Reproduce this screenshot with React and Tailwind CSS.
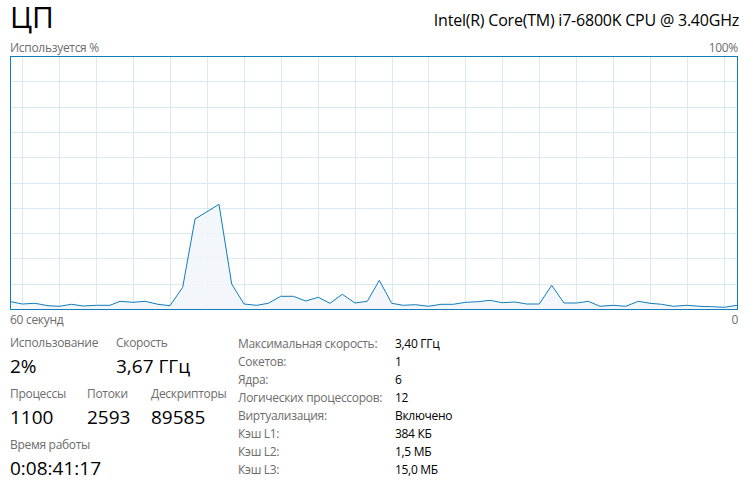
import React from "react";

const pts = [[10.7,301.7],[22.3,304],[35,303.3],[48,305.7],[59,306.3],[71.7,304.3],[83,306],[96.7,305.3],[110,305.3],[120,301.3],[133,302.3],[145,301.3],[158,304.3],[170,305.7],[182.7,287.3],[195,219],[207,211.7],[219,204.3],[231.7,284],[244,304],[256.7,305.3],[268.3,303.3],[280.7,296.3],[293.3,296.3],[305.7,301],[318.3,297.3],[330,303.3],[342.3,294.3],[355,303],[367.3,301.3],[379.3,280.3],[391.7,303.3],[403.3,305.3],[415.7,304.7],[428.3,306.3],[441,304.3],[453.3,304.3],[465.7,302.3],[478.3,301.7],[490,300.3],[502.3,302.7],[515,302],[526.7,304],[539.3,304],[551.7,285.3],[564,303],[576.7,303],[588.3,301.3],[600,306.3],[613.3,305.3],[625.7,306.3],[638.3,301.3],[650,303.3],[661.7,304.3],[673.3,306.3],[686.7,305.3],[700,306.3],[711.7,306.7],[724.3,307.3],[737,305.3]];

function Chart() {
  const vlines = [];
  for (let k = 0; k < 20; k++) vlines.push(Math.round(22 + 36.95 * k) + 0.5);
  const hlines = [];
  for (let k = 1; k < 10; k++) hlines.push(Math.round(56 + 25.3 * k) + 0.5);
  const line = pts.map((p) => p.join(",")).join(" ");
  const area = line + " 737,309 10.7,309";
  return (
    <div className="w-[728px] h-[254px] border border-[#117dbb]">
      <svg width="726" height="252" viewBox="11 57 726 252" className="block">
        {vlines.map((x) => (
          <line key={"v" + x} x1={x} x2={x} y1="57" y2="309" stroke="#d9eaf4" strokeWidth="1" />
        ))}
        {hlines.map((y) => (
          <line key={"h" + y} x1="11" x2="737" y1={y} y2={y} stroke="#d9eaf4" strokeWidth="1" />
        ))}
        <polygon points={area} fill="#f1f6fa" fillOpacity="0.85" />
        <polyline points={line} fill="none" stroke="#117dbb" strokeWidth="1" strokeLinejoin="round" />
      </svg>
    </div>
  );
}

function Stat({ label, value, w }) {
  return (
    <div className={w}>
      <div className="text-[12px] leading-[16px] tracking-[-0.3px] text-[#6d6d6d]">{label}</div>
      <div className="text-[19px] leading-[30px] text-black">{value}</div>
    </div>
  );
}

const rows = [
  ["Максимальная скорость:", "3,40 ГГц"],
  ["Сокетов:", "1"],
  ["Ядра:", "6"],
  ["Логических процессоров:", "12"],
  ["Виртуализация:", "Включено"],
  ["Кэш L1:", "384 КБ"],
  ["Кэш L2:", "1,5 МБ"],
  ["Кэш L3:", "15,0 МБ"],
];

export default function App() {
  return (
    <div className="w-[749px] h-[487px] bg-white px-[10px] overflow-hidden" style={{ fontFamily: '"Open Sans", "Noto Sans", sans-serif' }}>
      <div className="flex justify-between items-start h-[40px]">
        <div className="text-[30px] leading-[34px] font-normal text-black">ЦП</div>
        <div className="text-[16px] leading-[40px] tracking-[-0.22px] text-black">Intel(R) Core(TM) i7-6800K CPU @ 3.40GHz</div>
      </div>
      <div className="flex justify-between w-[728px] text-[12px] leading-[16px] tracking-[-0.3px] text-[#6d6d6d]">
        <span>Используется %</span>
        <span>100%</span>
      </div>
      <Chart />
      <div className="flex justify-between w-[728px] pt-[2px] text-[12px] leading-[16px] tracking-[-0.3px] text-[#6d6d6d]">
        <span>60 секунд</span>
        <span>0</span>
      </div>
      <div className="flex mt-[5px]">
        <div className="w-[228px] flex flex-col gap-[5px] pt-[2px]">
          <div className="flex">
            <Stat w="w-[106px]" label="Использование" value="2%" />
            <Stat label="Скорость" value="3,67 ГГц" />
          </div>
          <div className="flex">
            <Stat w="w-[77px]" label="Процессы" value="1100" />
            <Stat w="w-[64px]" label="Потоки" value="2593" />
            <Stat label="Дескрипторы" value="89585" />
          </div>
          <div className="flex">
            <Stat label="Время работы" value="0:08:41:17" />
          </div>
        </div>
        <div className="flex flex-col pt-[2px] text-[12px] leading-[18px] tracking-[-0.3px]">
          {rows.map(([k, v]) => (
            <div key={k} className="flex">
              <div className="w-[157px] text-[#6d6d6d]">{k}</div>
              <div className="text-black">{v}</div>
            </div>
          ))}
        </div>
      </div>
    </div>
  );
}
